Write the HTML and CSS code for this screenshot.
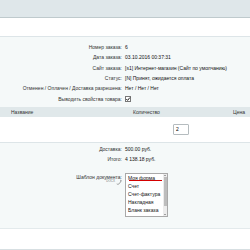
FILE: index.html
```html
<!DOCTYPE html>
<html lang="ru">
<head>
<meta charset="utf-8">
<link rel="stylesheet" href="styles.css">
</head>
<body>
<div class="tabs"></div>
<div class="toolbar"></div>
<div class="content">
  <div class="fields">
    <div class="label">Номер заказа:</div><div class="value">6</div>
    <div class="label">Дата заказа:</div><div class="value">03.10.2016 00:37:31</div>
    <div class="label">Сайт заказа:</div><div class="value">[s1] Интернет-магазин (Сайт по умолчанию)</div>
    <div class="label">Статус:</div><div class="value">[N] Принят, ожидается оплата</div>
    <div class="label">Отменен / Оплачен / Доставка разрешена:</div><div class="value">Нет / Нет / Нет</div>
    <div class="label">Выводить свойства товара:</div><div class="value"><span class="check"><svg viewBox="0 0 6 6" width="6" height="6"><path d="M1.3 3 L2.6 4.4 L4.8 1.6" fill="none" stroke="#222" stroke-width="1"/></svg></span></div>
  </div>
  <div class="items">
    <div class="head">
      <span class="c-name">Название</span>
      <span class="c-qty">Количество</span>
      <span class="c-price">Цена</span>
    </div>
    <div class="row">
      <span class="qty-input">2</span>
    </div>
  </div>
  <div class="fields totals">
    <div class="label">Доставка:</div><div class="value">500.00 руб.</div>
    <div class="label">Итого:</div><div class="value">4 138.18 руб.</div>
    <div class="label tpl">Шаблон документа:<div class="docx">DOCX <svg viewBox="0 0 8 8" width="6" height="6"><path d="M1 6.5 C2 7.5 4 7 5 5.5 L7 2 M5.5 1.5 L7.2 2.4" fill="none" stroke="#666" stroke-width="0.8"/></svg></div></div>
    <div class="value tplv">
      <div class="listbox">
        <div class="options">
          <div class="opt first">Моя форма</div>
          <div class="opt">Счет</div>
          <div class="opt">Счет-фактура</div>
          <div class="opt">Накладная</div>
          <div class="opt">Бланк заказа</div>
        </div>
        <div class="scroll">
          <span class="arr up"></span>
          <span class="thumb"></span>
          <span class="arr down"></span>
        </div>
      </div>
    </div>
  </div>
</div>
<div class="footer"></div>
</body>
</html>
```
FILE: styles.css
```css
* { box-sizing: border-box; }
html, body { margin: 0; padding: 0; }
body {
  width: 250px;
  height: 250px;
  overflow: hidden;
  background: #fff;
  font-family: "Liberation Sans", Arial, sans-serif;
  font-size: 5px;
  color: #222;
}
.tabs {
  height: 18px;
  background: #dfe7ea;
  border-bottom: 1px solid #bfcacd;
}
.toolbar {
  height: 19px;
  background: #fff;
  border-bottom: 1px solid #dde5e8;
}
.content {
  background: #f5f9f9;
  padding-top: 5px;
  border-bottom: 1px solid #e3eaec;
}
.fields {
  display: grid;
  grid-template-columns: 122px 1fr;
  column-gap: 3px;
  grid-auto-rows: 10.3px;
  align-items: center;
}
.label {
  text-align: right;
  color: #333;
  white-space: nowrap;
}
.value { color: #111; white-space: nowrap; }
.check {
  display: inline-block;
  width: 6px;
  height: 6px;
  border: 0.7px solid #777;
  background: #fff;
  vertical-align: middle;
  position: relative;
}
.check svg { display: block; position: absolute; left: -0.7px; top: -0.7px; }
.items {
  margin-top: 3px;
  background: #fff;
  border-bottom: 1px solid #dde5e8;
}
.head {
  display: flex;
  height: 10px;
  align-items: center;
  background: #e0e8ea;
  color: #333;
}
.c-name { margin-left: 11px; width: 122px; }
.c-qty { width: 100px; }
.row {
  height: 25px;
  display: flex;
  align-items: center;
  padding-left: 173px;
}
.qty-input {
  width: 16px;
  height: 11px;
  border: 1px solid #b5bcbf;
  border-radius: 1px;
  background: #fff;
  display: flex;
  align-items: center;
  padding-left: 2px;
  color: #000;
}
.totals {
  padding-top: 1px;
  grid-auto-rows: auto;
}
.totals > .label, .totals > .value { height: 10.5px; line-height: 10.5px; }
.totals > .label.tpl {
  height: auto;
  line-height: 6px;
  align-self: start;
  margin-top: 9px;
}
.totals > .value.tplv { height: auto; line-height: normal; margin-top: 8px; margin-bottom: 11px; }
.docx {
  font-size: 3px;
  color: #777;
  line-height: 5px;
  display: flex;
  justify-content: flex-end;
  align-items: center;
  gap: 1px;
  margin-top: -1px;
}
.docx svg { display: block; }
.listbox {
  width: 43px;
  height: 44px;
  border: 1px solid #a9a9a9;
  background: #fff;
  display: flex;
}
.options { flex: 1; padding-left: 2px; }
.opt { height: 8px; line-height: 8px; color: #111; }
.opt.first { position: relative; }
.opt.first::after {
  content: "";
  position: absolute;
  left: 1px;
  width: 33px;
  bottom: 0.5px;
  height: 1px;
  background: #d40000;
}
.scroll {
  width: 4px;
  background: #ececec;
  display: flex;
  flex-direction: column;
  align-items: center;
}
.thumb {
  width: 3px;
  flex: 0 0 29px;
  background: #bdbdbd;
  margin-top: 1px;
}
.arr { width: 0; height: 0; border-left: 1.5px solid transparent; border-right: 1.5px solid transparent; }
.arr.up { border-bottom: 1.5px solid #555; margin-top: 1px; }
.arr.down { border-top: 1.5px solid #555; margin-top: auto; margin-bottom: 1px; }
.footer {
  height: 21px;
  background: #fff;
  border-bottom: 1px solid #d7dfe2;
}
```
